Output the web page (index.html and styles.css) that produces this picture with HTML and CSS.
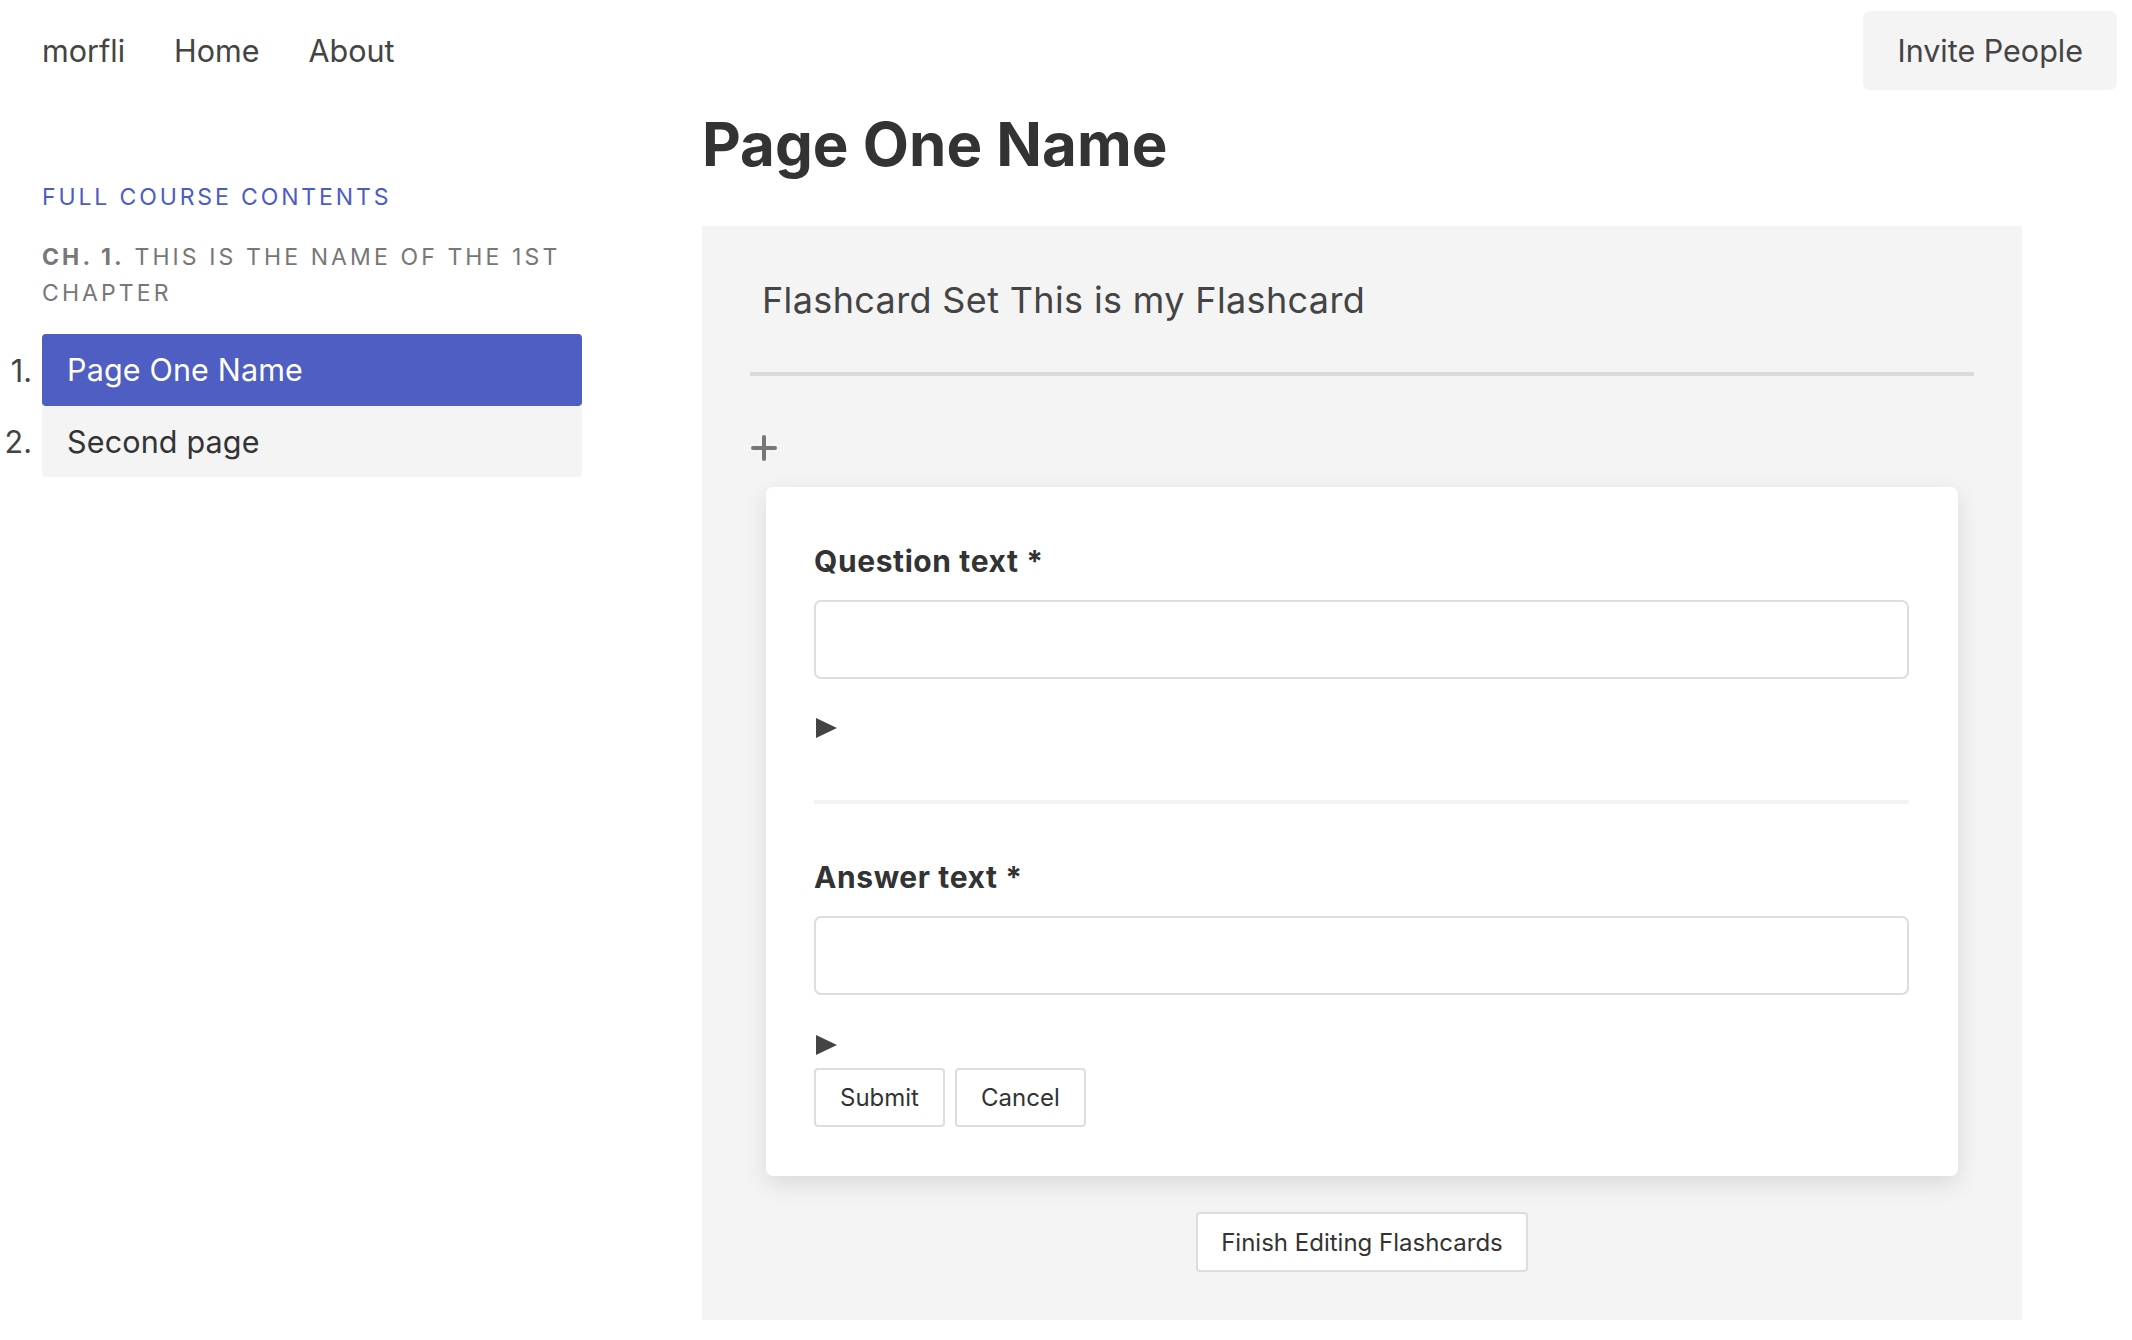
FILE: index.html
```html
<!DOCTYPE html>
<html lang="en">
<head>
<meta charset="utf-8">
<title>morfli</title>
<link rel="stylesheet" href="styles.css">
</head>
<body>
<header class="topbar">
  <nav class="mainnav">
    <a class="nav-link" href="#">morfli</a>
    <a class="nav-link" href="#">Home</a>
    <a class="nav-link" href="#">About</a>
  </nav>
  <button class="invite" type="button">Invite People</button>
</header>
<div class="layout">
  <aside class="sidebar">
    <div class="toc-title">Full course contents</div>
    <div class="chapter"><strong class="ch-num">Ch. 1.</strong> <span class="ch-name">This is the name of the 1st chapter</span></div>
    <ol class="pages">
      <li class="page"><span class="num">1.</span><a class="page-link active" href="#">Page One Name</a></li>
      <li class="page"><span class="num">2.</span><a class="page-link" href="#">Second page</a></li>
    </ol>
  </aside>
  <main class="content">
    <h1 class="page-title">Page One Name</h1>
    <section class="panel">
      <h2 class="set-title">Flashcard Set This is my Flashcard</h2>
      <div class="set-rule"></div>
      <div class="add-row">
        <button class="add-btn" type="button" aria-label="Add">
          <svg width="26" height="26" viewBox="0 0 26 26"><path d="M13 2v22M2 13h22" stroke="#777" stroke-width="4" stroke-linecap="round" fill="none"/></svg>
        </button>
      </div>
      <form class="card">
        <label class="field-label">Question text *</label>
        <input class="field-input" type="text">
        <div class="toggle">
          <svg width="22" height="20" viewBox="0 0 22 20"><path d="M1 0 L22 10 L1 20 Z" fill="#444"/></svg>
        </div>
        <div class="sep"></div>
        <label class="field-label answer">Answer text *</label>
        <input class="field-input" type="text">
        <div class="toggle second">
          <svg width="22" height="20" viewBox="0 0 22 20"><path d="M1 0 L22 10 L1 20 Z" fill="#444"/></svg>
        </div>
        <div class="actions">
          <button class="btn" type="button">Submit</button>
          <button class="btn" type="button">Cancel</button>
        </div>
      </form>
      <div class="finish-row">
        <button class="btn finish" type="button">Finish Editing Flashcards</button>
      </div>
    </section>
  </main>
</div>
</body>
</html>
```
FILE: styles.css
```css
* { box-sizing: border-box; }

html, body {
  margin: 0;
  padding: 0;
  background: #ffffff;
}

body {
  font-family: Inter, "Noto Sans", sans-serif;
  color: #444444;
}

.topbar {
  display: flex;
  justify-content: space-between;
  align-items: center;
  height: 90px;
  padding: 11px 15px 0 42px;
}

.mainnav {
  display: flex;
  gap: 49px;
}

.nav-link {
  font-size: 30.5px;
  line-height: 40px;
  color: #444444;
  text-decoration: none;
}

.invite {
  height: 79px;
  padding: 0 34px;
  border: none;
  border-radius: 7px;
  background: #f4f4f4;
  color: #444444;
  font-family: inherit;
  font-size: 30.5px;
}

.layout {
  display: grid;
  grid-template-columns: 582px 1320px;
  column-gap: 120px;
}

.sidebar {
  padding-top: 89px;
}

.toc-title {
  padding-left: 42px;
  font-size: 23px;
  line-height: 36px;
  letter-spacing: 0.125em;
  text-transform: uppercase;
  color: #4b5cc4;
}

.chapter {
  margin-top: 24px;
  padding-left: 42px;
  font-size: 23px;
  line-height: 36px;
  letter-spacing: 0.135em;
  text-transform: uppercase;
  color: #777777;
}

.ch-num {
  font-weight: 700;
}

.pages {
  list-style: none;
  margin: 23px 0 0;
  padding: 0;
}

.page {
  display: grid;
  grid-template-columns: 42px 1fr;
  align-items: center;
}

.num {
  padding-right: 10px;
  font-size: 30.5px;
  color: #444444;
  text-align: right;
}

.page-link {
  display: block;
  height: 72px;
  line-height: 72px;
  padding-left: 25px;
  border-radius: 4px;
  background: #f4f4f4;
  color: #333333;
  font-size: 30.5px;
  letter-spacing: 0.005em;
  text-decoration: none;
}

.page + .page .page-link {
  height: 71px;
  line-height: 71px;
}

.page-link.active {
  background: #4f5ec2;
  color: #ffffff;
}

.page-title {
  margin: 18px 0 0;
  font-size: 60px;
  line-height: 72px;
  font-weight: 700;
  color: #333333;
}

.panel {
  margin-top: 46px;
  padding: 50px 48px 48px;
  background: #f4f4f4;
}

.set-title {
  margin: 0;
  padding-left: 12px;
  font-size: 36px;
  line-height: 48px;
  font-weight: 400;
  color: #444444;
  letter-spacing: 0.01em;
}

.set-rule {
  margin-top: 48px;
  height: 4px;
  background: #dadada;
}

.add-row {
  margin-top: 52px;
  height: 40px;
  display: flex;
  align-items: center;
}

.add-btn {
  display: flex;
  align-items: center;
  justify-content: center;
  padding: 0;
  margin-left: 1px;
  width: 26px;
  height: 40px;
  border: none;
  background: transparent;
}

.card {
  display: flex;
  flex-direction: column;
  margin: 19px 16px 0;
  padding: 54px 49px 49px 48px;
  background: #ffffff;
  border-radius: 7px;
  box-shadow: 0 8px 24px rgba(0, 0, 0, 0.11);
}

.field-label {
  font-size: 30px;
  line-height: 40px;
  font-weight: 700;
  color: #333333;
  letter-spacing: 0.02em;
}

.field-input {
  margin-top: 19px;
  height: 79px;
  border: 2px solid #dddddd;
  border-radius: 7px;
  background: #ffffff;
  font-family: inherit;
  font-size: 28px;
}

.toggle {
  margin-top: 34px;
  height: 30px;
  display: flex;
  align-items: center;
  padding-left: 1px;
}

.toggle.second {
  margin-top: 35px;
}

.sep {
  margin-top: 57px;
  height: 4px;
  background: #f3f3f3;
}

.field-label.answer {
  margin-top: 53px;
}

.actions {
  display: flex;
  gap: 10px;
  margin-top: 8px;
}

.btn {
  height: 59px;
  padding: 0 24px;
  border: 2px solid #dddddd;
  border-radius: 4px;
  background: #ffffff;
  color: #333333;
  font-family: inherit;
  font-size: 24px;
}

.finish-row {
  display: flex;
  justify-content: center;
  margin-top: 36px;
}

.finish {
  height: 60px;
  padding: 0 23px;
}
```
